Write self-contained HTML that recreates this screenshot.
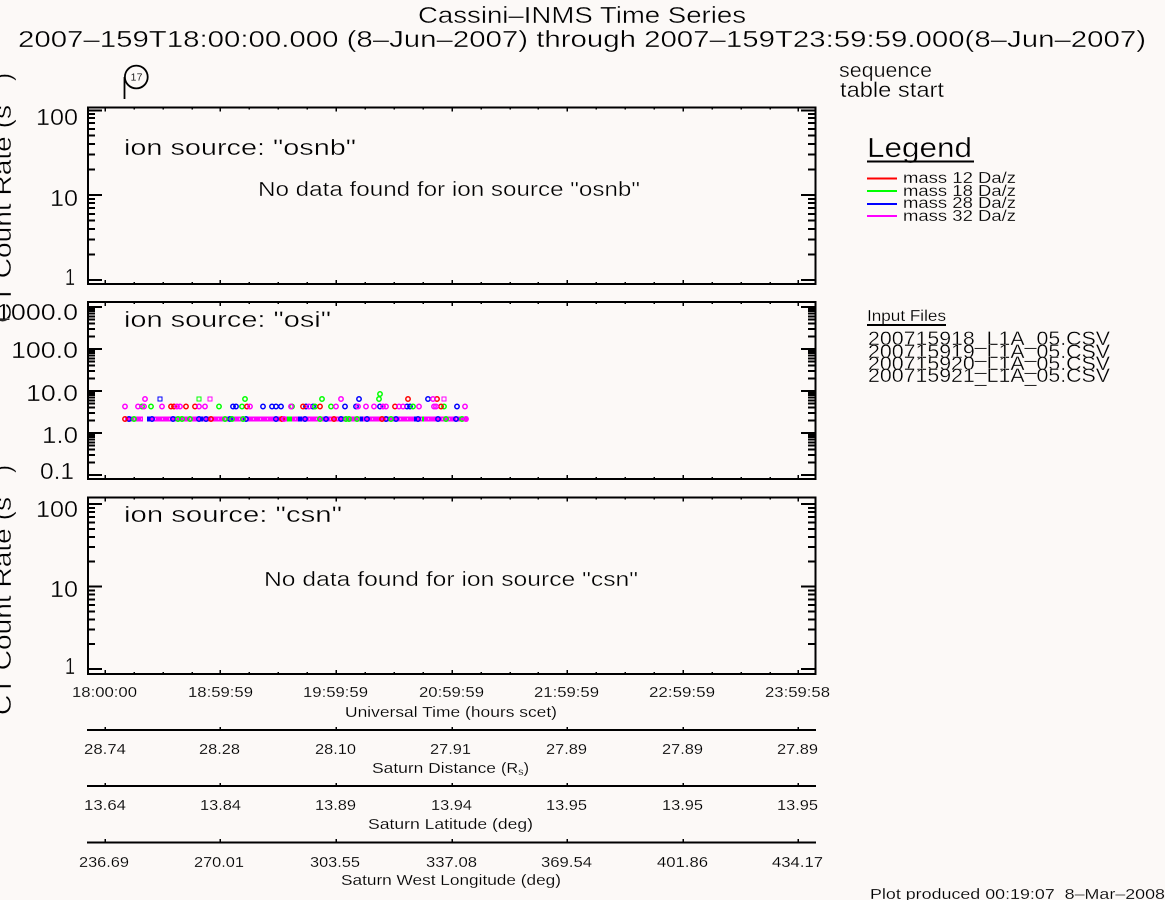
<!DOCTYPE html>
<html><head><meta charset="utf-8"><title>Cassini-INMS Time Series</title>
<style>
html,body{margin:0;padding:0;background:#fcf9f7;overflow:hidden;width:1165px;height:900px}
svg{display:block}
text{font-family:"Liberation Sans",sans-serif;fill:#000;white-space:pre;stroke:#fcf9f7;stroke-width:.35px}
.a{font-size:23px}.t{font-size:15px;stroke-width:.15px}.l{font-size:15px;stroke-width:.15px}.m{font-size:16px;stroke-width:.2px}
.d circle{fill:none;stroke-width:1.5}
.c{shape-rendering:crispEdges}
</style></head><body>
<svg xmlns="http://www.w3.org/2000/svg" width="1165" height="900" viewBox="0 0 1165 900">
<defs>
<path id="xb" class="c" d="M105 0v-4M134 0v-2M163 0v-2M192 0v-2M220 0v-4M249 0v-2M278 0v-2M307 0v-2M336 0v-4M365 0v-2M394 0v-2M423 0v-2M452 0v-4M481 0v-2M510 0v-2M538 0v-2M567 0v-4M596 0v-2M625 0v-2M654 0v-2M683 0v-4M712 0v-2M741 0v-2M770 0v-2M798 0v-4" fill="none" stroke="#000" stroke-width="1.5"/>
<path id="y1" class="c" d="M0 280h15M0 254.4h8M0 239.5h8M0 228.8h8M0 220.6h8M0 213.9h8M0 208.2h8M0 203.2h8M0 198.9h8M0 195h15M0 169.4h8M0 154.5h8M0 143.8h8M0 135.6h8M0 128.9h8M0 123.2h8M0 118.2h8M0 113.9h8M0 110.5h15" fill="none" stroke="#000" stroke-width="2"/>
<path id="y2" class="c" d="M0 475h15M0 462.4h8M0 455h8M0 449.7h8M0 445.6h8M0 442.3h8M0 439.5h8M0 437.1h8M0 434.9h8M0 433h15M0 420.4h8M0 413h8M0 407.7h8M0 403.6h8M0 400.3h8M0 397.5h8M0 395.1h8M0 392.9h8M0 391h15M0 378.4h8M0 371h8M0 365.7h8M0 361.6h8M0 358.3h8M0 355.5h8M0 353.1h8M0 350.9h8M0 349h15M0 336.4h8M0 329h8M0 323.7h8M0 319.6h8M0 316.3h8M0 313.5h8M0 311.1h8M0 308.9h8M0 307h15" fill="none" stroke="#000" stroke-width="2"/>
<path id="y3" class="c" d="M0 669h15M0 644.2h8M0 629.6h8M0 619.3h8M0 611.3h8M0 604.8h8M0 599.3h8M0 594.5h8M0 590.3h8M0 586.5h15M0 561.7h8M0 547.1h8M0 536.8h8M0 528.8h8M0 522.3h8M0 516.8h8M0 512h8M0 507.8h8M0 504h15" fill="none" stroke="#000" stroke-width="2"/>
</defs>

<text x="418" y="23" font-size="23" textLength="328" lengthAdjust="spacingAndGlyphs">Cassini–INMS Time Series</text>
<text x="18" y="47" font-size="23" textLength="1128" lengthAdjust="spacingAndGlyphs">2007–159T18:00:00.000 (8–Jun–2007) through 2007–159T23:59:59.000(8–Jun–2007)</text>

<path d="M124.5 99V77" stroke="#000" stroke-width="1.8" fill="none"/>
<circle cx="136.3" cy="77" r="11.4" fill="none" stroke="#000" stroke-width="1.8"/>
<text x="130.5" y="80.5" font-size="10" textLength="12" lengthAdjust="spacingAndGlyphs" style="stroke-width:.1px">17</text>

<text transform="translate(11 323) rotate(-90)" font-size="24" textLength="218" lengthAdjust="spacingAndGlyphs">CT Count Rate (s</text>
<text transform="translate(11 81) rotate(-90)" font-size="24">)</text>
<text transform="translate(11 715) rotate(-90)" font-size="24" textLength="218" lengthAdjust="spacingAndGlyphs">CT Count Rate (s</text>
<text transform="translate(11 473) rotate(-90)" font-size="24">)</text>

<g class="c" fill="none" stroke="#000" stroke-width="2">
<rect x="88" y="107.5" width="727.5" height="176.5"/>
<rect x="88" y="302" width="727.5" height="177"/>
<rect x="88" y="497.5" width="727.5" height="176.5"/>
</g>
<use href="#xb" transform="translate(0 284)"/><use href="#xb" transform="translate(0 107.5) scale(1 -1)"/>
<use href="#xb" transform="translate(0 479)"/><use href="#xb" transform="translate(0 302) scale(1 -1)"/>
<use href="#xb" transform="translate(0 674)"/><use href="#xb" transform="translate(0 497.5) scale(1 -1)"/>
<use href="#y1" transform="translate(87 0)"/><use href="#y1" transform="translate(816 0) scale(-1 1)"/>
<use href="#y2" transform="translate(87 0)"/><use href="#y2" transform="translate(816 0) scale(-1 1)"/>
<use href="#y3" transform="translate(87 0)"/><use href="#y3" transform="translate(816 0) scale(-1 1)"/>

<g class="a">
<text class="a" x="36" y="125" textLength="42" lengthAdjust="spacingAndGlyphs">100</text>
<text class="a" x="50" y="206" textLength="28" lengthAdjust="spacingAndGlyphs">10</text>
<text class="a" x="65" y="285" textLength="10" lengthAdjust="spacingAndGlyphs">1</text>
<text class="a" x="-4" y="320" textLength="82" lengthAdjust="spacingAndGlyphs">1000.0</text>
<text class="a" x="11" y="358" textLength="67" lengthAdjust="spacingAndGlyphs">100.0</text>
<text class="a" x="26" y="401" textLength="52" lengthAdjust="spacingAndGlyphs">10.0</text>
<text class="a" x="42" y="443" textLength="36" lengthAdjust="spacingAndGlyphs">1.0</text>
<text class="a" x="40" y="479" textLength="34" lengthAdjust="spacingAndGlyphs">0.1</text>
<text class="a" x="36" y="517" textLength="42" lengthAdjust="spacingAndGlyphs">100</text>
<text class="a" x="50" y="597" textLength="28" lengthAdjust="spacingAndGlyphs">10</text>
<text class="a" x="65" y="674" textLength="10" lengthAdjust="spacingAndGlyphs">1</text>
</g>

<text x="124" y="155" font-size="22" textLength="232" lengthAdjust="spacingAndGlyphs">ion source: "osnb"</text>
<text x="258" y="196" font-size="20" textLength="382" lengthAdjust="spacingAndGlyphs">No data found for ion source "osnb"</text>
<text x="124" y="327" font-size="22" textLength="207" lengthAdjust="spacingAndGlyphs">ion source: "osi"</text>
<text x="124" y="522" font-size="22" textLength="218" lengthAdjust="spacingAndGlyphs">ion source: "csn"</text>
<text x="264" y="586" font-size="20" textLength="374" lengthAdjust="spacingAndGlyphs">No data found for ion source "csn"</text>

<path class="c" d="M125 419H143M147 419H468" stroke="#f0f" stroke-width="5" fill="none"/>
<path class="c" d="M127 419H468" stroke="#fcf9f7" stroke-width="1" stroke-dasharray="1 6" fill="none"/>
<path class="c" d="M287 419H292M422 419H424" stroke="#0f0" stroke-width="5" fill="none"/>
<path class="c" d="M147 419H150M200 419H203M298 419H302M360 419H363M414 419H417" stroke="#00f" stroke-width="5" fill="none"/>
<g class="d">
<g stroke="#00f">
<circle cx="129" cy="419" r="2.2"/><circle cx="152" cy="419" r="2.2"/><circle cx="173" cy="419" r="2.2"/><circle cx="199" cy="419" r="2.2"/><circle cx="206" cy="419" r="2.2"/><circle cx="230" cy="419" r="2.2"/><circle cx="246" cy="419" r="2.2"/><circle cx="276" cy="419" r="2.2"/><circle cx="305" cy="419" r="2.2"/><circle cx="326" cy="419" r="2.2"/><circle cx="341" cy="419" r="2.2"/><circle cx="367" cy="419" r="2.2"/><circle cx="386" cy="419" r="2.2"/><circle cx="418" cy="419" r="2.2"/><circle cx="456" cy="419" r="2.2"/><circle cx="438" cy="419" r="2.2"/><circle cx="396" cy="419" r="2.2"/>
<circle cx="233" cy="406.5" r="2.2"/><circle cx="236" cy="406.5" r="2.2"/><circle cx="263" cy="406.5" r="2.2"/><circle cx="272" cy="406.5" r="2.2"/><circle cx="276" cy="406.5" r="2.2"/><circle cx="281" cy="406.5" r="2.2"/><circle cx="306" cy="406.5" r="2.2"/><circle cx="313" cy="406.5" r="2.2"/><circle cx="345" cy="406.5" r="2.2"/><circle cx="356" cy="406.5" r="2.2"/><circle cx="380" cy="406.5" r="2.2"/><circle cx="407" cy="406.5" r="2.2"/><circle cx="410" cy="406.5" r="2.2"/><circle cx="457" cy="406.5" r="2.2"/>
<circle cx="359" cy="399" r="2.2"/><circle cx="428" cy="399" r="2.2"/>
</g>
<rect x="158" y="397" width="4" height="4" fill="none" stroke="#00f" stroke-width="1" class="c"/>
<g stroke="#0f0">
<circle cx="134" cy="419" r="2.2"/><circle cx="178" cy="419" r="2.2"/><circle cx="182" cy="419" r="2.2"/><circle cx="190" cy="419" r="2.2"/><circle cx="225" cy="419" r="2.2"/><circle cx="232" cy="419" r="2.2"/><circle cx="243" cy="419" r="2.2"/><circle cx="320" cy="419" r="2.2"/><circle cx="346" cy="419" r="2.2"/><circle cx="349" cy="419" r="2.2"/><circle cx="357" cy="419" r="2.2"/><circle cx="391" cy="419" r="2.2"/><circle cx="446" cy="419" r="2.2"/><circle cx="462" cy="419" r="2.2"/>
<circle cx="142" cy="406.5" r="2.2"/><circle cx="151" cy="406.5" r="2.2"/><circle cx="219" cy="406.5" r="2.2"/><circle cx="242" cy="406.5" r="2.2"/><circle cx="292" cy="406.5" r="2.2"/><circle cx="315" cy="406.5" r="2.2"/><circle cx="331" cy="406.5" r="2.2"/><circle cx="413" cy="406.5" r="2.2"/><circle cx="444" cy="406.5" r="2.2"/>
<circle cx="245" cy="399" r="2.2"/><circle cx="322" cy="399" r="2.2"/><circle cx="379" cy="399" r="2.2"/><circle cx="380" cy="394" r="2.2"/>
</g>
<rect x="197" y="397" width="4" height="4" fill="none" stroke="#0f0" stroke-width="1" class="c"/>
<g stroke="#f00">
<circle cx="125" cy="419" r="2.2"/><circle cx="211" cy="419" r="2.2"/><circle cx="282" cy="419" r="2.2"/><circle cx="334" cy="419" r="2.2"/><circle cx="382" cy="419" r="2.2"/>
<circle cx="171" cy="406.5" r="2.2"/><circle cx="174" cy="406.5" r="2.2"/><circle cx="186" cy="406.5" r="2.2"/><circle cx="195" cy="406.5" r="2.2"/><circle cx="247" cy="406.5" r="2.2"/><circle cx="303" cy="406.5" r="2.2"/><circle cx="320" cy="406.5" r="2.2"/><circle cx="395" cy="406.5" r="2.2"/><circle cx="441" cy="406.5" r="2.2"/>
<circle cx="408" cy="399" r="2.2"/><circle cx="437" cy="399" r="2.2"/>
</g>
<g stroke="#f0f">
<circle cx="125" cy="406.5" r="2.2"/><circle cx="138" cy="406.5" r="2.2"/><circle cx="144" cy="406.5" r="2.2"/><circle cx="162" cy="406.5" r="2.2"/><circle cx="177" cy="406.5" r="2.2"/><circle cx="180" cy="406.5" r="2.2"/><circle cx="199" cy="406.5" r="2.2"/><circle cx="205" cy="406.5" r="2.2"/><circle cx="250" cy="406.5" r="2.2"/><circle cx="291" cy="406.5" r="2.2"/><circle cx="309" cy="406.5" r="2.2"/><circle cx="336" cy="406.5" r="2.2"/><circle cx="358" cy="406.5" r="2.2"/><circle cx="366" cy="406.5" r="2.2"/><circle cx="374" cy="406.5" r="2.2"/><circle cx="383" cy="406.5" r="2.2"/><circle cx="386" cy="406.5" r="2.2"/><circle cx="399" cy="406.5" r="2.2"/><circle cx="403" cy="406.5" r="2.2"/><circle cx="419" cy="406.5" r="2.2"/><circle cx="434" cy="406.5" r="2.2"/><circle cx="436" cy="406.5" r="2.2"/><circle cx="465" cy="406.5" r="2.2"/>
<circle cx="145" cy="399" r="2.2"/><circle cx="341" cy="399" r="2.2"/><circle cx="433" cy="399" r="2.2"/>
<circle cx="284" cy="419" r="2.2"/><circle cx="466" cy="419" r="2.2"/>
</g>
<rect x="208" y="397" width="4" height="4" fill="none" stroke="#f0f" stroke-width="1" class="c"/>
<rect x="442" y="397" width="4" height="4" fill="none" stroke="#f0f" stroke-width="1" class="c"/>
</g>

<text x="839" y="77" font-size="20" textLength="93" lengthAdjust="spacingAndGlyphs">sequence</text>
<text x="840" y="97" font-size="21" textLength="104" lengthAdjust="spacingAndGlyphs">table start</text>
<text x="867" y="157" font-size="28" textLength="105" lengthAdjust="spacingAndGlyphs">Legend</text>
<path class="c" d="M867 161.5H974" stroke="#000" stroke-width="2"/>
<path class="c" d="M867 178.5H897" stroke="#f00" stroke-width="2"/>
<path class="c" d="M867 191H897" stroke="#0f0" stroke-width="2"/>
<path class="c" d="M867 204H897" stroke="#00f" stroke-width="2"/>
<path class="c" d="M867 216H897" stroke="#f0f" stroke-width="2"/>
<text class="m" x="903" y="183" textLength="113" lengthAdjust="spacingAndGlyphs">mass 12 Da/z</text>
<text class="m" x="903" y="196" textLength="113" lengthAdjust="spacingAndGlyphs">mass 18 Da/z</text>
<text class="m" x="903" y="208" textLength="113" lengthAdjust="spacingAndGlyphs">mass 28 Da/z</text>
<text class="m" x="903" y="221" textLength="113" lengthAdjust="spacingAndGlyphs">mass 32 Da/z</text>
<text class="m" x="867" y="321" textLength="79" lengthAdjust="spacingAndGlyphs">Input Files</text>
<path class="c" d="M867 325H946" stroke="#000" stroke-width="2"/>
<text x="868" y="345" font-size="19" textLength="242" lengthAdjust="spacingAndGlyphs">200715918_L1A_05.CSV</text>
<text x="868" y="358" font-size="19" textLength="242" lengthAdjust="spacingAndGlyphs">200715919_L1A_05.CSV</text>
<text x="868" y="370" font-size="19" textLength="242" lengthAdjust="spacingAndGlyphs">200715920_L1A_05.CSV</text>
<text x="868" y="382" font-size="19" textLength="242" lengthAdjust="spacingAndGlyphs">200715921_L1A_05.CSV</text>

<text class="t" x="72" y="697" textLength="65" lengthAdjust="spacingAndGlyphs">18:00:00</text>
<text class="t" x="188" y="697" textLength="65" lengthAdjust="spacingAndGlyphs">18:59:59</text>
<text class="t" x="303" y="697" textLength="65" lengthAdjust="spacingAndGlyphs">19:59:59</text>
<text class="t" x="419" y="697" textLength="65" lengthAdjust="spacingAndGlyphs">20:59:59</text>
<text class="t" x="534" y="697" textLength="65" lengthAdjust="spacingAndGlyphs">21:59:59</text>
<text class="t" x="649" y="697" textLength="66" lengthAdjust="spacingAndGlyphs">22:59:59</text>
<text class="t" x="765" y="697" textLength="65" lengthAdjust="spacingAndGlyphs">23:59:58</text>
<text class="l" x="345" y="717" textLength="212" lengthAdjust="spacingAndGlyphs">Universal Time (hours scet)</text>

<g class="c" fill="none" stroke="#000" stroke-width="2">
<path d="M87 730H816M87 786H816M87 842.5H816"/>
<path d="M105 730v-3M220 730v-3M336 730v-3M452 730v-3M567 730v-3M683 730v-3M798 730v-3M105 786v-3M220 786v-3M336 786v-3M452 786v-3M567 786v-3M683 786v-3M798 786v-3M105 842v-3M220 842v-3M336 842v-3M452 842v-3M567 842v-3M683 842v-3M798 842v-3" stroke-width="1.5"/>
</g>

<text class="t" x="84" y="754" textLength="42" lengthAdjust="spacingAndGlyphs">28.74</text>
<text class="t" x="199" y="754" textLength="41" lengthAdjust="spacingAndGlyphs">28.28</text>
<text class="t" x="315" y="754" textLength="41" lengthAdjust="spacingAndGlyphs">28.10</text>
<text class="t" x="430" y="754" textLength="41" lengthAdjust="spacingAndGlyphs">27.91</text>
<text class="t" x="546" y="754" textLength="41" lengthAdjust="spacingAndGlyphs">27.89</text>
<text class="t" x="662" y="754" textLength="41" lengthAdjust="spacingAndGlyphs">27.89</text>
<text class="t" x="777" y="754" textLength="41" lengthAdjust="spacingAndGlyphs">27.89</text>
<text class="l" x="372" y="773" textLength="124" lengthAdjust="spacingAndGlyphs">Saturn Distance</text>
<text class="l" x="501" y="773" textLength="28" lengthAdjust="spacingAndGlyphs">(R<tspan font-size="10" dy="2">s</tspan><tspan dy="-2">)</tspan></text>

<text class="t" x="84" y="810" textLength="42" lengthAdjust="spacingAndGlyphs">13.64</text>
<text class="t" x="200" y="810" textLength="41" lengthAdjust="spacingAndGlyphs">13.84</text>
<text class="t" x="315" y="810" textLength="41" lengthAdjust="spacingAndGlyphs">13.89</text>
<text class="t" x="431" y="810" textLength="41" lengthAdjust="spacingAndGlyphs">13.94</text>
<text class="t" x="546" y="810" textLength="41" lengthAdjust="spacingAndGlyphs">13.95</text>
<text class="t" x="662" y="810" textLength="41" lengthAdjust="spacingAndGlyphs">13.95</text>
<text class="t" x="777" y="810" textLength="41" lengthAdjust="spacingAndGlyphs">13.95</text>
<text class="l" x="368" y="829" textLength="165" lengthAdjust="spacingAndGlyphs">Saturn Latitude (deg)</text>

<text class="t" x="79" y="867" textLength="50" lengthAdjust="spacingAndGlyphs">236.69</text>
<text class="t" x="194" y="867" textLength="50" lengthAdjust="spacingAndGlyphs">270.01</text>
<text class="t" x="310" y="867" textLength="50" lengthAdjust="spacingAndGlyphs">303.55</text>
<text class="t" x="426" y="867" textLength="51" lengthAdjust="spacingAndGlyphs">337.08</text>
<text class="t" x="541" y="867" textLength="51" lengthAdjust="spacingAndGlyphs">369.54</text>
<text class="t" x="657" y="867" textLength="51" lengthAdjust="spacingAndGlyphs">401.86</text>
<text class="t" x="772" y="867" textLength="51" lengthAdjust="spacingAndGlyphs">434.17</text>
<text class="l" x="341" y="885" textLength="220" lengthAdjust="spacingAndGlyphs">Saturn West Longitude (deg)</text>

<text class="l" x="870" y="899" textLength="295" lengthAdjust="spacingAndGlyphs">Plot produced 00:19:07  8–Mar–2008</text>
</svg>
</body></html>
